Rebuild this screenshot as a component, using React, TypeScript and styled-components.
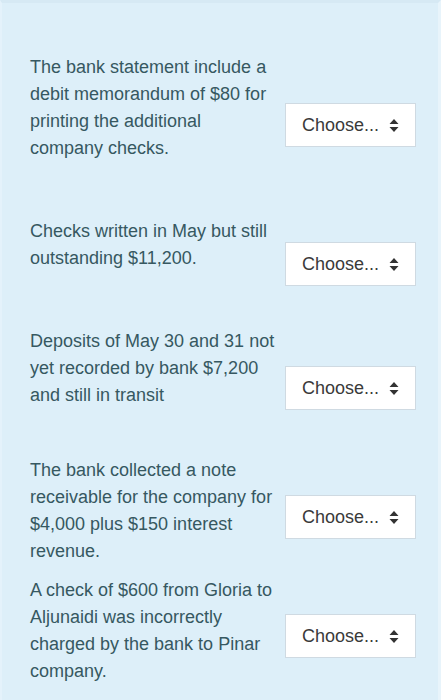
import React from 'react';
import styled, { createGlobalStyle } from 'styled-components';

const GlobalStyle = createGlobalStyle`
  html, body {
    margin: 0;
    padding: 0;
    background: #ddeff9;
  }
`;

const Page = styled.div`
  width: 441px;
  min-height: 700px;
  box-sizing: border-box;
  padding: 0 22px 0 28px;
  background: #ddeff9;
  border-top: 3px solid #d6e9f4;
  border-left: 2px solid #e4f2fb;
  border-right: 3px solid #e8f4fb;
  font-family: 'Liberation Sans', Arial, sans-serif;
  font-size: 18px;
  line-height: 27px;
  color: #365861;
`;

const Row = styled.div<{ $top: number }>`
  display: flex;
  align-items: flex-start;
  justify-content: space-between;
  padding-top: ${(p) => p.$top}px;
`;

const Prompt = styled.div`
  width: 248px;
`;

const SelectBox = styled.div<{ $offset: number }>`
  margin-top: ${(p) => p.$offset}px;
  width: 131px;
  height: 44px;
  box-sizing: border-box;
  display: flex;
  align-items: center;
  justify-content: space-between;
  padding: 0 16px 0 16px;
  background: #fff;
  border: 1px solid #cfdae2;
  font-size: 18px;
  color: #3a3a3a;
`;

const Arrows = () => (
  <svg width="10" height="15" viewBox="0 0 10 15">
    <path d="M5 1 L9.5 6 H0.5 Z M5 14 L9.5 9 H0.5 Z" fill="#333" />
  </svg>
);

const items = [
  {
    text: 'The bank statement include a debit memorandum of $80 for printing the additional company checks.',
    top: 51,
    offset: 49,
  },
  { text: 'Checks written in May but still outstanding $11,200.', top: 56, offset: 24 },
  {
    text: 'Deposits of May 30 and 31 not yet recorded by bank $7,200 and still in transit',
    top: 42,
    offset: 38,
  },
  {
    text: 'The bank collected a note receivable for the company for $4,000 plus $150 interest revenue.',
    top: 47,
    offset: 38,
  },
  {
    text: 'A check of $600 from Gloria to Aljunaidi was incorrectly charged by the bank to Pinar company.',
    top: 12,
    offset: 37,
  },
];

const App = () => (
  <>
    <GlobalStyle />
    <Page>
      {items.map((item) => (
        <Row key={item.text} $top={item.top}>
          <Prompt>{item.text}</Prompt>
          <SelectBox $offset={item.offset}>
            <span>Choose...</span>
            <Arrows />
          </SelectBox>
        </Row>
      ))}
    </Page>
  </>
);

export default App;
